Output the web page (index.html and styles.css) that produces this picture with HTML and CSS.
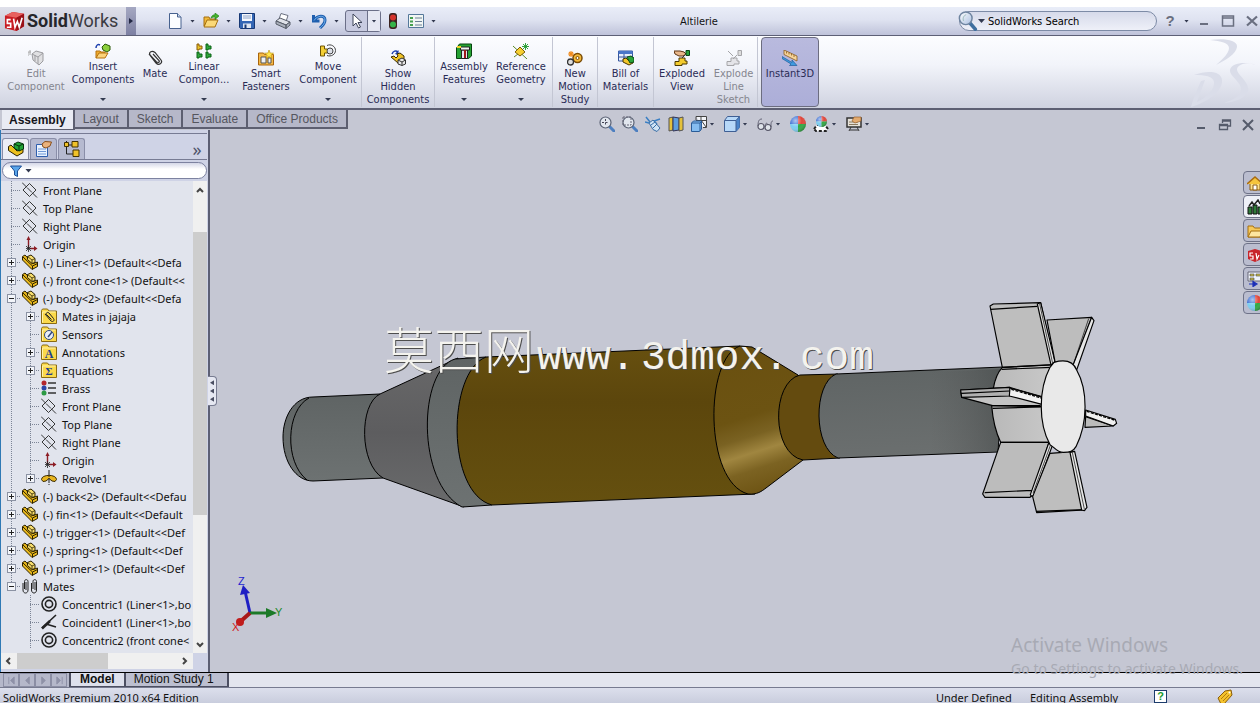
FILE: index.html
```html
<!DOCTYPE html>
<html lang="en">
<head>
<meta charset="utf-8">
<title>SolidWorks - Altilerie</title>
<link rel="stylesheet" href="styles.css">
</head>
<body>
<svg class="defs" aria-hidden="true">
  <defs>
    <linearGradient id="g-steel" x1="0" y1="0" x2="0" y2="1"><stop offset="0" stop-color="#5f6464"/><stop offset="1" stop-color="#6d7272"/></linearGradient>
    <linearGradient id="g-cone" x1="0" y1="0" x2="0" y2="1"><stop offset="0" stop-color="#686869"/><stop offset=".5" stop-color="#5d5d5f"/><stop offset="1" stop-color="#6a6b6c"/></linearGradient>
    <linearGradient id="g-brass" x1="0" y1="0" x2="0" y2="1"><stop offset="0" stop-color="#67500f"/><stop offset=".35" stop-color="#5c460c"/><stop offset="1" stop-color="#65500f"/></linearGradient>
    <linearGradient id="g-shine" gradientUnits="userSpaceOnUse" x1="732" y1="350" x2="778" y2="494"><stop offset="0" stop-color="#6a5010"/><stop offset=".45" stop-color="#6c5312"/><stop offset=".58" stop-color="#7a6222"/><stop offset=".69" stop-color="#a08640"/><stop offset=".8" stop-color="#7c6322"/><stop offset="1" stop-color="#6a5010"/></linearGradient>
    <linearGradient id="g-tail" gradientUnits="userSpaceOnUse" x1="900" y1="370" x2="905" y2="456"><stop offset="0" stop-color="#606565"/><stop offset="1" stop-color="#6b6f6f"/></linearGradient>
    <linearGradient id="g-dark" x1="0" y1="0" x2="1" y2="0"><stop offset="0" stop-color="#555" stop-opacity="0"/><stop offset="1" stop-color="#3c4040" stop-opacity=".45"/></linearGradient>
    <linearGradient id="g-hub" x1="0" y1="0" x2="1" y2="0"><stop offset="0" stop-color="#b9b9b9"/><stop offset="1" stop-color="#cbcbcb"/></linearGradient>
    <linearGradient id="g-glass" x1="0" y1="0" x2="1" y2="1"><stop offset="0" stop-color="#fff"/><stop offset="1" stop-color="#a9bfe0"/></linearGradient>
    <radialGradient id="g-ball" cx=".35" cy=".3" r=".8"><stop offset="0" stop-color="#fff" stop-opacity=".6"/><stop offset=".5" stop-color="#fff" stop-opacity="0"/><stop offset="1" stop-color="#000" stop-opacity=".35"/></radialGradient>
  </defs>
  <symbol id="i-part" viewBox="0 0 16 16"><path d="M.5 2.500L3 1l8 8.500 4.500-1.500v4.500L10 15.500.5 6z" fill="#e9b81b" stroke="#2a2000"/><path d="M1 3l9.500 9v3M10.500 12l5-2.500" fill="none" stroke="#2a2000"/><path d="M5.500 2.500L9 1l4 3.500v4L10 9.500 5.500 5.500z" fill="#f7dd6c" stroke="#2a2000"/><path d="M5.500 2.500l4.500 3.500v3.500M10 6l3-1.500" fill="none" stroke="#2a2000" stroke-width=".8"/></symbol>
  <symbol id="i-asm" viewBox="0 0 16 16"><path d="M.5 5.500L3 4l6 6 6-2.500v4L9 15 .5 9.500z" fill="#ecc01e" stroke="#2a2000"/><path d="M6 3l4-2 5.500 2v5l-4.500 2-5-3z" fill="#21a337" stroke="#06350f"/><path d="M6 3l5 2v5M11 5l4-2" fill="none" stroke="#06350f"/></symbol>
  <symbol id="i-plane" viewBox="0 0 16 16"><path d="M7.500 1.500L14 8l-6.500 6.500L1 8zM0 .5l4.500 4.500M5 5.500l5 5M10.500 11l4.500 4.500" fill="none" stroke="#222" stroke-width=".9"/></symbol>
  <symbol id="i-origin" viewBox="0 0 16 16"><path d="M6.500 12V3M8 12.500h5" stroke="#8c1c24" stroke-width="1.400"/><path d="M4.500 4L6.500 0l2 4zM12 10l3.500 2.500L12 15z" fill="#8c1c24"/><path d="M4 10l5 5M9 10l-5 5M6.500 9v7M4 12.500h5" stroke="#222" stroke-width=".8"/></symbol>
  <symbol id="i-folder" viewBox="0 0 16 16"><path d="M.5 15.500v-13l1-1.500h5l1.500 2h7.500v12.500z" fill="#fbd94a" stroke="#8a6b12"/><path d="M1.500 14.500V4h13" fill="none" stroke="#fff2ac"/></symbol>
  <symbol id="i-fmate" viewBox="0 0 16 16"><use href="#i-folder"/><path d="M4 6l6 7c2 1.500 4-.5 2.500-2.500L8 5C6.500 3.500 4.500 5 5.500 6.500l5 5" fill="none" stroke="#222"/></symbol>
  <symbol id="i-fsens" viewBox="0 0 16 16"><use href="#i-folder"/><circle cx="8" cy="9" r="4.500" fill="#e8eef8" stroke="#334a7a"/><path d="M7 11l4-5" stroke="#334a7a" stroke-width="1.500"/></symbol>
  <symbol id="i-fann" viewBox="0 0 16 16"><use href="#i-folder"/><text x="8" y="14" class="glyph">A</text></symbol>
  <symbol id="i-feq" viewBox="0 0 16 16"><use href="#i-folder"/><text x="8" y="13" class="glyph glyph-small">Σ</text></symbol>
  <symbol id="i-brass" viewBox="0 0 16 16"><circle cx="3" cy="3" r="2.500" fill="#b3262d"/><circle cx="3" cy="8" r="2.500" fill="#2b45a8"/><circle cx="3" cy="13" r="2.500" fill="#2c9a44"/><path d="M7 3h8M7 8h8M7 13h8" stroke="#333" stroke-width="1.500"/></symbol>
  <symbol id="i-revolve" viewBox="0 0 16 16"><path d="M.5 9.500C.5 4 15.500 4 15.500 9.500l-1.500 2-3-.5L8 8.500 5 11l-3 .5z" fill="#e9b61f" stroke="#3a2a00"/><path d="M8 0v16" stroke="#222" stroke-dasharray="5 1 1 1"/></symbol>
  <symbol id="i-mates" viewBox="0 0 16 16"><path d="M1 5v7c0 4 5 4 5 0V3.500C6 1 2.500 1 2.500 3.500V11M9.500 5v7c0 4 5 4 5 0V3.500c0-2.500-3.500-2.500-3.500 0V11M4 4v8M13 4v8" fill="none" stroke="#222"/></symbol>
  <symbol id="i-conc" viewBox="0 0 16 16"><circle cx="8" cy="8" r="7" fill="none" stroke="#222" stroke-width="1.600"/><circle cx="8" cy="8" r="3.600" fill="none" stroke="#222" stroke-width="1.600"/></symbol>
  <symbol id="i-coin" viewBox="0 0 16 16"><path d="M1 14L15 1M5 10l10 3" stroke="#222" stroke-width="1.600"/><path d="M1 14.500L9 7" stroke="#222" stroke-width="2.600"/></symbol>
  <symbol id="i-ball" viewBox="0 0 16 16"><path d="M8 8V0a8 8 0 0 0-8 8z" fill="#3b6fd4"/><path d="M8 8V0a8 8 0 0 1 8 8z" fill="#e0453a"/><path d="M8 8H0a8 8 0 0 0 8 8z" fill="#7ccdf0"/><path d="M8 8h8a8 8 0 0 1-8 8z" fill="#2fa843"/><circle cx="8" cy="8" r="8" fill="url(#g-ball)"/></symbol>
  <symbol id="i-lens" viewBox="0 0 16 16"><path d="M10 10l5 5" stroke="#4d7fc0" stroke-width="3" stroke-linecap="round"/><circle cx="6.500" cy="6.500" r="5.500" fill="#e1e6ee" stroke="#5a6274" stroke-width="1.200"/></symbol>
  <symbol id="i-openfolder" viewBox="0 0 16 16"><path d="M1 13V4h5l1 2h6v2H5z" fill="#f1b938" stroke="#a46f10"/><path d="M1 14l3-7h11l-3 7z" fill="#fbd978" stroke="#a46f10"/></symbol>
</svg>

<header class="titlebar">
  <div class="brand">
    <svg class="cube" viewBox="0 0 22 22" aria-hidden="true"><path d="M1 5l8-4 12 2v13l-8 5-12-3z" fill="#c81d24"/><path d="M1 5l8-4 12 2-8 4z" fill="#e8615f"/><path d="M13 7l8-4v13l-8 5z" fill="#9a1218"/><path d="M7 9H3.500v4H7v4H3M10 8l1.500 9L14 11l2 6 3-10" fill="none" stroke="#fff" stroke-width="1.700"/></svg>
    <span class="wordmark"><b>Solid</b>Works</span>
  </div>
  <button class="flyout" aria-label="Show menu"><i class="tri-right"></i></button>
  <nav class="quick" aria-label="Quick access">
    <button aria-label="New"><svg viewBox="0 0 16 16"><path d="M2.500.5h8l3.500 3.500v11.500H2.500z" fill="#fbfdff" stroke="#46618e"/><path d="M10.500.5V4H14" fill="#cddcf0" stroke="#46618e"/></svg></button><i class="drop"></i>
    <button aria-label="Open"><svg viewBox="0 0 16 16"><use href="#i-openfolder"/><path d="M8 5c1-3 3-3.500 4-3V0l4 3-4 3.500V4c-1 0-2 0-4 1z" fill="#45b42e" stroke="#1d7a12" stroke-width=".6"/></svg></button><i class="drop"></i>
    <button aria-label="Save"><svg viewBox="0 0 16 16"><path d="M.5.5h15v15h-14l-1-1z" fill="#3466b4" stroke="#173874"/><path d="M3 1h10v7H3z" fill="#f4f7fc"/><path d="M4 3h8M4 5h8" stroke="#8ea3c8"/><path d="M4 10.500h8V15H4z" fill="#dfe6f2"/><path d="M5.500 11.500h2V15h-2z" fill="#173874"/></svg></button><i class="drop"></i>
    <button aria-label="Print"><svg viewBox="0 0 16 16"><path d="M4 6l2-5.500 7 2-2 6" fill="#fff" stroke="#6b7180"/><path d="M1 8l4-3 10 4-4 3z" fill="#dfe2e8" stroke="#565c68"/><path d="M1 8v3l10 4.500v-3.500zM11 12l4-3v3l-4 3.500z" fill="#a9afba" stroke="#565c68"/></svg></button><i class="drop"></i>
    <button aria-label="Undo"><svg viewBox="0 0 16 16"><path d="M2.500 2v6h6M3 7.500c3-5 11-6 11-.5 0 4-3 6-5 8" fill="none" stroke="#1f5fae" stroke-width="3"/><path d="M3 7.500c3-5 11-6 11-.5 0 4-3 6-5 8" fill="none" stroke="#71b1ee" stroke-width="1"/></svg></button><i class="drop"></i>
    <span class="selectbox"><button aria-label="Select"><svg viewBox="0 0 16 16"><path d="M4 1v12l3-3 2.500 5 2-1L9 9.500h4z" fill="#fff" stroke="#3d4459"/></svg></button><button class="half" aria-label="Select options"><i class="drop"></i></button></span>
    <button class="signal" aria-label="Rebuild"><svg viewBox="0 0 16 16"><rect x="4" y="0" width="8" height="16" rx="3" fill="#3b2320"/><circle cx="8" cy="4.500" r="3" fill="#d5332c"/><circle cx="8" cy="11.500" r="3" fill="#35b348"/></svg></button>
    <button class="opts" aria-label="Options"><svg viewBox="0 0 16 16"><path d="M.5 1.500h15v13H.5z" fill="#f1f6f4" stroke="#55789a"/><path d="M2 4h3v2H2zM2 7.500h3v2H2zM2 11h3v2H2z" fill="#46a04e"/><path d="M7 5h7M7 8.500h7M7 12h7" stroke="#6c8096"/></svg></button><i class="drop"></i>
  </nav>
  <h1 class="doc">Altilerie</h1>
  <label class="search"><svg viewBox="0 0 22 22" aria-hidden="true"><path d="M13 13l6 7" stroke="#3e6f9f" stroke-width="4" stroke-linecap="round"/><circle cx="8.500" cy="8" r="7" fill="url(#g-glass)" stroke="#6e84a0" stroke-width="1.600"/><path d="M6 11c-1-3 0-6 3-7" fill="none" stroke="#9bb"/></svg><i class="drop drop-lg"></i><input type="text" value="SolidWorks Search" aria-label="Search"></label>
  <div class="winctl">
    <button class="help" aria-label="Help">?</button><i class="drop"></i>
    <button aria-label="Minimize"><svg viewBox="0 0 14 14"><path d="M3 10h8" stroke="#6a6f80" stroke-width="2"/></svg></button>
    <button aria-label="Maximize"><svg viewBox="0 0 14 14"><path d="M1.500 2h11v10h-11zM1.500 4h11" fill="none" stroke="#6a6f80" stroke-width="1.500"/></svg></button>
    <button aria-label="Close"><svg viewBox="0 0 14 14"><path d="M2 2.500l10 9M12 2.500l-10 9" stroke="#6a6f80" stroke-width="2.200"/></svg></button>
  </div>
</header>

<section class="ribbon" aria-label="Assembly tools">
  <div class="group g1">
    <button class="tool off" disabled><svg viewBox="0 0 16 16"><path d="M0 6V2h3M2 0v5" fill="none" stroke="#aaa"/><path d="M4 4l4-3 7 2v8l-4 4-6-5z" fill="#e0e0e2" stroke="#9c9ca0"/><path d="M4 4l6 3v7M10 7l5-4M7 5v6" fill="none" stroke="#9c9ca0"/></svg><span>Edit<br>Component</span></button>
    <button class="tool up"><svg viewBox="0 0 16 16"><path d="M7 4l3-3 5 2v4l-3 2-4-2z" fill="#8ccf3c" stroke="#2b5b08"/><path d="M1 5c0-3 2-4 4-3" fill="none" stroke="#1c3fae" stroke-width="1.500"/><path d="M1 15V8h4l1 1h4v2H5z" fill="#f0ab2c" stroke="#b5730e"/><path d="M1 15l3-5h9l-3 5z" fill="#fcd37a" stroke="#b5730e"/></svg><span>Insert<br>Components</span><i class="drop"></i></button>
    <button class="tool"><svg viewBox="0 0 16 16"><path d="M2 4l7 9c3 3 7 0 5-3L8 2.500C5 0 1.500 2 3 5l6.500 7c2 1 3.500 0 2.500-1.500L6 4" fill="none" stroke="#333" stroke-width="1.200"/></svg><span>Mate</span></button>
    <button class="tool up"><svg viewBox="0 0 16 16"><path d="M1 1h2v2h3v3H3v1H1z" fill="#e9c42b" stroke="#8a5a08"/><path d="M10 1h2v2h3v3h-3v1h-2zM1 9h2v2h3v3H3v1H1zM10 9h2v2h3v3h-3v1h-2z" fill="#2fa53a" stroke="#0a6416"/></svg><span>Linear<br>Compon...</span><i class="drop"></i></button>
    <button class="tool"><svg viewBox="0 0 16 16"><path d="M.5 15V3h5l1 1.500h9V15z" fill="#f5b945" stroke="#a8640c"/><path d="M3 7h5v6H3zM10 8h3v5h-3z" fill="#eef0f4" stroke="#555"/><path d="M11 0l1.200 3 3.300.2-2.500 2 .8 3L11 6.500 8.300 8.200l.9-3-2.700-2L10 3z" fill="#ffe54a" stroke="#b98d0b" stroke-width=".6"/></svg><span>Smart<br>Fasteners</span></button>
    <button class="tool up"><svg viewBox="0 0 16 16"><path d="M.5 3h4v3h3v4h-3v3h-4z" fill="#f4cf35" stroke="#6e5405"/><path d="M7 2.500c4-2 8.500 1 8.500 5S11 14 7 12.500" fill="none" stroke="#444"/><circle cx="10" cy="8" r="3" fill="#dde0e8" stroke="#444"/></svg><span>Move<br>Component</span><i class="drop"></i></button>
  </div>
  <div class="group g2">
    <button class="tool"><svg viewBox="0 0 16 16"><path d="M2 4c1-3 4-4 6-2" fill="none" stroke="#1c3fae" stroke-width="1.500"/><path d="M8.500 0v5L5 4z" fill="#1c3fae"/><path d="M1 7l3-1 2 2 2-2-1-2 3-1 4 3v3l-2 1-4 3z" fill="#f0c325" stroke="#3b2b00"/><path d="M8 10l4-2 3.500 2v4L12 15.500 8 14z" fill="#e8e8e8" stroke="#333"/><path d="M8 10l4 2v3.500M12 12l3.500-2" fill="none" stroke="#333"/></svg><span>Show<br>Hidden<br>Components</span></button>
  </div>
  <div class="group g3">
    <button class="tool up"><svg viewBox="0 0 16 16"><path d="M.5 5l3-4h12v12l-3 2.500H.5z" fill="#25a233" stroke="#07430f"/><path d="M5.500 7h6v8.500h-6z" fill="#e6e9ee" stroke="#222"/><path d="M4.500 4h9v3h-9z" fill="#f2f2f2" stroke="#222"/><path d="M8 7h2v8H8z" fill="#a01818"/><path d="M1 4h4" stroke="#f3d52c" stroke-width="2"/></svg><span>Assembly<br>Features</span><i class="drop"></i></button>
    <button class="tool up"><svg viewBox="0 0 16 16"><path d="M0 3l14 13M1 14l4-3" stroke="#5b8a26"/><path d="M7 4l5 5-5 4-5-4z" fill="#f6cf31" stroke="#7c5d05"/><path d="M12.500 0v7M9 3.500h7M10 1l5 5M15 1l-5 5" stroke="#1f9a2e" stroke-width=".9"/></svg><span>Reference<br>Geometry</span><i class="drop"></i></button>
  </div>
  <div class="group g4">
    <button class="tool"><svg viewBox="0 0 16 16"><circle cx="10.500" cy="8" r="4.500" fill="#f4b93a" stroke="#7a4b05" stroke-width="1.500"/><circle cx="10.500" cy="8" r="1.500" fill="#fff" stroke="#7a4b05"/><circle cx="3.500" cy="12" r="3" fill="#ddd" stroke="#333" stroke-width="1.300"/><path d="M4 1v6M1 4h6M2 2l4 4M6 2L2 6" stroke="#f08a1c" stroke-width="1.100"/></svg><span>New<br>Motion<br>Study</span></button>
  </div>
  <div class="group g5">
    <button class="tool"><svg viewBox="0 0 16 16"><path d="M.5 1h14v10H.5z" fill="#e8eefb" stroke="#34559c"/><path d="M.5 1h14v3H.5z" fill="#4a76c9"/><path d="M1 7h14M6 4v7" stroke="#34559c"/><path d="M5 9l3-1 3 3 4-2v4l-4 2-6-3z" fill="#f1c62b" stroke="#463400"/><path d="M9 7l4-1 3 2v4l-4 1z" fill="#2aa539" stroke="#0a4a14"/></svg><span>Bill of<br>Materials</span></button>
  </div>
  <div class="group g6">
    <button class="tool"><svg viewBox="0 0 16 16"><path d="M0 1h6l4 1 2 2-3 2H5L1 4z" fill="#e9b78a" stroke="#5d3412"/><path d="M12 .5h3.500v5H12z" fill="#2ba43a" stroke="#0b4514"/><path d="M5 8h6v3h2v3H8v1.500H1v-4h4z" fill="#f3cb2e" stroke="#4b3800"/><path d="M11 5l-3 3" stroke="#333"/></svg><span>Exploded<br>View</span></button>
    <button class="tool off" disabled><svg viewBox="0 0 16 16"><path d="M2 1l5 5M12 .5h3.500v5H12z" fill="#ddd" stroke="#a5a5a8"/><path d="M5 8h6v3h2v3H8v1.500H1v-4h4z" fill="#e4e4e8" stroke="#a5a5a8"/><path d="M11 5L7 9" stroke="#a5a5a8"/></svg><span>Explode<br>Line<br>Sketch</span></button>
  </div>
  <div class="group g7">
    <button class="tool pressed" aria-pressed="true"><svg viewBox="0 0 16 16"><path d="M2 0l13 6v5L2 4.500z" fill="#f6d49a" stroke="#8a5a1c" stroke-width=".8"/><path d="M4.500 1.500v2M7 2.500v2M9.500 3.500v2M12 5v2" stroke="#8a5a1c" stroke-width=".8"/><path d="M0 6.500l10 6V10l5 5.500H7.500l1.500-1.500L0 8.500z" fill="#3f9ade" stroke="#1e5d9c" stroke-width=".7"/></svg><span>Instant3D</span></button>
  </div>
  <svg class="dslogo" viewBox="0 0 66 68" aria-hidden="true"><path d="M20 1c14-2 28 0 27 7-1 7-11 13-21 18 7-6 13-12 13-17 0-5-8-7-19-8zM4 36c14-5 27-4 28 5 1 11-14 22-31 27 2-9 6-17 10-26l4-1-8 22c10-5 18-13 17-20-1-6-9-7-20-7zM66 26c-9-3-18-1-19 4s13 13 11 22c-2 7-12 11-24 12 9-3 16-7 17-13 1-8-12-14-11-20 1-7 15-9 26-5z"/></svg>
</section>

<nav class="cmdtabs" aria-label="Command manager">
  <button class="on">Assembly</button><button>Layout</button><button>Sketch</button><button>Evaluate</button><button>Office Products</button>
</nav>

<main class="work">
  <aside class="panel">
    <div class="ptabs">
      <button class="on" aria-label="Feature tree"><svg viewBox="0 0 16 16"><use href="#i-asm"/></svg></button>
      <button aria-label="Properties"><svg viewBox="0 0 16 16"><path d="M.5 3.500h11v12H.5z" fill="#eaf3ff" stroke="#2f5fae"/><path d="M2 8h8M2 10.500h8M2 13h8" stroke="#6f98d6"/><path d="M6 3l3-2.500L15.500 1 14 5l-4 2-3-1z" fill="#eab27c" stroke="#8a501c"/></svg></button>
      <button aria-label="Configurations"><svg viewBox="0 0 16 16"><path d="M2.500 0v13H10M2.500 4H9" fill="none" stroke="#222"/><path d="M.5 1.500h4v4h-4zM8 .5h6v5.500H8zM9 9h6v6.500H9z" fill="#f0c22a" stroke="#453300"/></svg></button>
      <button class="more" aria-label="More">»</button>
    </div>
    <label class="filter"><svg viewBox="0 0 12 12" aria-hidden="true"><path d="M.5 1h11L7.500 6v5.500l-3-1.500V6z" fill="#5aa5ea" stroke="#1c4f96"/></svg><i class="drop drop-lg"></i><input type="text" aria-label="Filter tree"></label>
    <div class="scroller">
      <ul class="tree">
        <li><div class="row"><i class="twig"></i><svg><use href="#i-plane"/></svg><span>Front Plane</span></div></li>
        <li><div class="row"><i class="twig"></i><svg><use href="#i-plane"/></svg><span>Top Plane</span></div></li>
        <li><div class="row"><i class="twig"></i><svg><use href="#i-plane"/></svg><span>Right Plane</span></div></li>
        <li><div class="row"><i class="twig"></i><svg><use href="#i-origin"/></svg><span>Origin</span></div></li>
        <li><div class="row"><i class="twig"><button class="exp plus" aria-label="Expand"></button></i><svg><use href="#i-part"/></svg><span>(-) Liner&lt;1&gt; (Default&lt;&lt;Defa</span></div></li>
        <li><div class="row"><i class="twig"><button class="exp plus" aria-label="Expand"></button></i><svg><use href="#i-part"/></svg><span>(-) front cone&lt;1&gt; (Default&lt;&lt;</span></div></li>
        <li><div class="row"><i class="twig"><button class="exp" aria-label="Collapse"></button></i><svg><use href="#i-part"/></svg><span>(-) body&lt;2&gt; (Default&lt;&lt;Defa</span></div>
          <ul>
            <li><div class="row"><i class="twig"><button class="exp plus" aria-label="Expand"></button></i><svg><use href="#i-fmate"/></svg><span>Mates in jajaja</span></div></li>
            <li><div class="row"><i class="twig"></i><svg><use href="#i-fsens"/></svg><span>Sensors</span></div></li>
            <li><div class="row"><i class="twig"><button class="exp plus" aria-label="Expand"></button></i><svg><use href="#i-fann"/></svg><span>Annotations</span></div></li>
            <li><div class="row"><i class="twig"><button class="exp plus" aria-label="Expand"></button></i><svg><use href="#i-feq"/></svg><span>Equations</span></div></li>
            <li><div class="row"><i class="twig"></i><svg><use href="#i-brass"/></svg><span>Brass</span></div></li>
            <li><div class="row"><i class="twig"></i><svg><use href="#i-plane"/></svg><span>Front Plane</span></div></li>
            <li><div class="row"><i class="twig"></i><svg><use href="#i-plane"/></svg><span>Top Plane</span></div></li>
            <li><div class="row"><i class="twig"></i><svg><use href="#i-plane"/></svg><span>Right Plane</span></div></li>
            <li><div class="row"><i class="twig"></i><svg><use href="#i-origin"/></svg><span>Origin</span></div></li>
            <li><div class="row"><i class="twig"><button class="exp plus" aria-label="Expand"></button></i><svg><use href="#i-revolve"/></svg><span>Revolve1</span></div></li>
          </ul>
        </li>
        <li><div class="row"><i class="twig"><button class="exp plus" aria-label="Expand"></button></i><svg><use href="#i-part"/></svg><span>(-) back&lt;2&gt; (Default&lt;&lt;Defau</span></div></li>
        <li><div class="row"><i class="twig"><button class="exp plus" aria-label="Expand"></button></i><svg><use href="#i-part"/></svg><span>(-) fin&lt;1&gt; (Default&lt;&lt;Default</span></div></li>
        <li><div class="row"><i class="twig"><button class="exp plus" aria-label="Expand"></button></i><svg><use href="#i-part"/></svg><span>(-) trigger&lt;1&gt; (Default&lt;&lt;Def</span></div></li>
        <li><div class="row"><i class="twig"><button class="exp plus" aria-label="Expand"></button></i><svg><use href="#i-part"/></svg><span>(-) spring&lt;1&gt; (Default&lt;&lt;Def</span></div></li>
        <li><div class="row"><i class="twig"><button class="exp plus" aria-label="Expand"></button></i><svg><use href="#i-part"/></svg><span>(-) primer&lt;1&gt; (Default&lt;&lt;Def</span></div></li>
        <li><div class="row"><i class="twig"><button class="exp" aria-label="Collapse"></button></i><svg><use href="#i-mates"/></svg><span>Mates</span></div>
          <ul class="open">
            <li><div class="row"><i class="twig"></i><svg><use href="#i-conc"/></svg><span>Concentric1 (Liner&lt;1&gt;,bo</span></div></li>
            <li><div class="row"><i class="twig"></i><svg><use href="#i-coin"/></svg><span>Coincident1 (Liner&lt;1&gt;,bo</span></div></li>
            <li><div class="row"><i class="twig"></i><svg><use href="#i-conc"/></svg><span>Concentric2 (front cone&lt;</span></div></li>
          </ul>
        </li>
      </ul>
      <div class="vbar" aria-hidden="true"><svg viewBox="0 0 14 16"><path d="M4 11l3-3 3 3"/></svg><i class="vthumb"></i><svg viewBox="0 0 14 16"><path d="M4 6l3 3 3-3"/></svg></div>
    </div>
    <div class="hbar" aria-hidden="true"><svg viewBox="0 0 14 16"><path d="M9 5L6 8l3 3"/></svg><i class="hthumb"></i><svg viewBox="0 0 14 16"><path d="M4 5l3 3-3 3"/></svg></div>
    <button class="splitter" aria-label="Hide panel"><i></i><i></i><i></i></button>
  </aside>

  <section class="view" aria-label="Graphics area">
    <svg class="model" viewBox="210 130 1050 542" role="img" aria-label="Shell assembly">
      <g stroke="#000" stroke-width="1" stroke-linejoin="round">
        <path d="M313 397C293 397 283 418 283 437 283 462 296 481 313 481L383 478 380 394z" fill="url(#g-steel)"/>
        <path d="M309 398C286 410 284 462 307 480" fill="none"/>
        <path d="M380 394C359 404 359 464 383 478L464 507 458 358z" fill="url(#g-cone)"/>
        <path d="M455 359C418 370 416 483 462 507L492 505 486 357z" fill="url(#g-steel)"/>
        <path d="M486 357C447 372 446 493 492 505L755 494 740 346z" fill="url(#g-brass)"/>
        <path d="M740 346C704 358 704 482 748 494 757 495 762 491 766 488L803 460 798 375 752 347z" fill="url(#g-shine)"/>
        <path d="M800 375C771 382 771 454 803 460L840 458 838 374z" fill="#644b0f"/>
        <path d="M836 374L1003 367 998 452 838 458C813 448 813 384 836 374z" fill="url(#g-tail)"/>
        <path d="M930 372l72-3-4 82-68 3z" fill="url(#g-dark)" stroke="none"/>
      </g>
      <g transform="translate(930 290) scale(.3333)" stroke="#000" stroke-width="3.500" stroke-linejoin="round">
        <path d="M217 232L365 222 400 350 357 457 212 457C194 420 188 385 185 347L190 295C195 265 204 246 217 232z" fill="url(#g-hub)"/>
        <path d="M180 48L190 42 332 38 372 218 365 225 217 232z" fill="#bebebe"/><path d="M182 58L322 49M217 232l150-8M215 238l150-6" fill="none"/>
        <path d="M322 42l10-4 43 177-12 10z" fill="#e2e2e2"/><path d="M329 42l39 178" fill="none" stroke-width="2"/>
        <path d="M351 90L485 82 430 230 375 215z" fill="#bdbdbd"/>
        <path d="M485 82l7 10-52 148-12-12z" fill="#e6e6e6"/><path d="M476 86L432 218" fill="none" stroke-width="2"/>
        <path d="M92 300L238 292 335 320 335 350 188 347 95 322z" fill="#c4c4c4"/>
        <path d="M92 300l148-8v26L95 322zM94 310l144-7" fill="#b0b0b0"/>
        <path d="M240 294L338 322 336 343 238 318z" fill="#f2f2f2"/><path d="M244 298l90 26" fill="none" stroke-width="4" stroke-dasharray="9 4"/>
        <path d="M186 347l146 0M188 355l144-4M210 464l148-5" fill="none"/>
        <path d="M212 457L357 457 308 612 300 622 165 622 158 612z" fill="#bcbcbc"/>
        <path d="M164 608l142-7M357 457l10 10-53 145-8 8-5-6z" fill="#e4e4e4"/><path d="M362 464l-53 146" stroke-width="2"/>
        <path d="M360 490L428 485 465 660 320 668 308 620z" fill="#bebebe"/><path d="M318 664l146-5"/>
        <path d="M420 487l14-3 37 168-8 10-8-2z" fill="#e8e8e8"/><path d="M427 487l36 170" stroke-width="2"/>
        <path d="M467 380l82 28-84 4z" fill="#bbb"/>
        <path d="M467 360L556 388 560 400 550 408 467 378z" fill="#f0f0f0"/><path d="M470 364l86 27" fill="none" stroke-width="4" stroke-dasharray="9 4"/>
        <path d="M372 217C410 206 430 215 440 240 474 300 474 400 438 470 430 484 420 487 400 487 380 487 372 470 360 464 325 400 325 300 360 232z" fill="#e9e9e9"/>
      </g>
      <g stroke-width="2">
        <path d="M250 613l-5-22" stroke="#1f1fc4" stroke-width="3"/><path d="M240 595l3-10 7 8z" fill="#1f1fc4"/>
        <path d="M250 613h18" stroke="#1c7a28" stroke-width="3"/><path d="M266 608l11 5-11 5z" fill="#1c7a28"/>
        <path d="M250 613l-9 8" stroke="#a81818" stroke-width="4"/><circle cx="240" cy="622" r="4" fill="#c01c1c"/>
      </g>
      <g class="axis"><text x="238" y="585" fill="#1f1fd0">Z</text><text x="275" y="616" fill="#1c8a28">Y</text><text x="232" y="631" fill="#d01c1c">X</text></g>
      <g class="mark">
        <g class="mark-shade"><text x="385" y="370" class="han">莫西网</text><text x="538" y="370">www.</text><text x="642" y="370">3dmox.</text><text x="801" y="370">com</text></g>
        <g class="mark-face" aria-hidden="true"><text x="384" y="369" class="han">莫西网</text><text x="537" y="369">www.</text><text x="641" y="369">3dmox.</text><text x="800" y="369">com</text></g>
      </g>
    </svg>

    <nav class="hud" aria-label="View tools">
      <button aria-label="Zoom to fit"><svg viewBox="0 0 16 16"><use href="#i-lens"/><path d="M6.500 3v7M3 6.500h7" stroke="#445" stroke-dasharray="2 1.500"/></svg></button>
      <button aria-label="Zoom to area"><svg viewBox="0 0 16 16"><use href="#i-lens"/><path d="M1 1h8v8H1z" fill="none" stroke="#667" stroke-dasharray="2 1"/></svg></button>
      <button aria-label="Previous view"><svg viewBox="0 0 16 16"><path d="M1 1l4 5M0 6l4 1M15 3L9 5l3 3" fill="none" stroke="#3a7fc4" stroke-width="1.500"/><path d="M4 7l4-3 7 8-3 3.500-4-2z" fill="#cfe3f5" stroke="#3a6ea5"/><path d="M6 9l4-3M8 12l4-4" stroke="#3a6ea5"/></svg></button>
      <button aria-label="Section view"><svg viewBox="0 0 16 16"><path d="M1 2l4-1v13l-4 1z" fill="#e4c13a" stroke="#555"/><path d="M5 1l6 1v12l-6 1z" fill="#5f9edc" stroke="#335"/><path d="M11 2l4-1v13l-4 1z" fill="#e4c13a" stroke="#555"/></svg></button>
      <button aria-label="View orientation"><svg viewBox="0 0 16 16"><path d="M5 .5h10.500v11H12M5 .5V4M10 .5V4M5 4.500h10.500M10 4l5 7" fill="#f2f4f8" stroke="#444"/><path d="M.5 7l2-2h8v8l-2 2.500h-8z" fill="#86bdf0" stroke="#2a5c98"/><path d="M1 7h8v8M9 7l2-2" fill="none" stroke="#2a5c98"/></svg></button><i class="drop"></i>
      <button aria-label="Display style"><svg viewBox="0 0 16 16"><path d="M.5 4.500l3-4h12v11l-3.500 4H.5z" fill="#b7d8f8" stroke="#3f5f94"/><path d="M12 4.500l3.500-4v11l-3.500 4z" fill="#4b84c9"/><path d="M.5 4.500H12v11M12 4.500l3.500-4" fill="none" stroke="#3f5f94"/></svg></button><i class="drop"></i>
      <button aria-label="Hide/show items"><svg viewBox="0 0 16 16"><path d="M1 10c0-5 1-7 4-7M8 11c0-4 2-5 3-2M14 11c0-4 0-6 2-6" fill="none" stroke="#667"/><circle cx="4" cy="10.500" r="3" fill="#dfe4ea" stroke="#556" stroke-width="1.200"/><circle cx="11" cy="11.500" r="3" fill="#dfe4ea" stroke="#556" stroke-width="1.200"/></svg></button><i class="drop"></i>
      <button aria-label="Edit appearance"><svg viewBox="0 0 16 16"><use href="#i-ball"/></svg></button>
      <button aria-label="Apply scene"><svg viewBox="0 0 16 16"><path d="M1 13l3-4h8l3 4-2 2H3z" fill="#fff" stroke="#222" stroke-dasharray="3 2" stroke-width="2"/><use href="#i-ball" x="3" y="0" width="11" height="11"/></svg></button><i class="drop"></i>
      <button aria-label="View settings"><svg viewBox="0 0 16 16"><path d="M1 2h14v9H1z" fill="#e6e2da" stroke="#333" stroke-width="1.500"/><path d="M3 6h9M3 8.500h9" stroke="#8a7a60"/><path d="M8 1h7v4L9 7 6 5z" fill="#e3ab70" stroke="#8a501c" stroke-width=".6"/><path d="M5 11l-2 4M11 11l2 4M4 14h8" stroke="#333"/></svg></button><i class="drop"></i>
    </nav>
    <div class="mdi">
      <button aria-label="Minimize document"><svg viewBox="0 0 14 14"><path d="M2 10h8" stroke="#555b6b" stroke-width="2"/></svg></button>
      <button aria-label="Restore document"><svg viewBox="0 0 14 14"><path d="M4.500 5V2h8v6h-3M4.500 3h8M1.500 6.500h8v5h-8zM1.500 7.500h8" fill="none" stroke="#555b6b" stroke-width="1.300"/></svg></button>
      <button aria-label="Close document"><svg viewBox="0 0 14 14"><path d="M2 2l10 10M12 2L2 12" stroke="#555b6b" stroke-width="2"/></svg></button>
    </div>
    <nav class="taskpane" aria-label="Task pane">
      <button aria-label="Resources"><svg viewBox="0 0 16 16"><path d="M3 8v7h10V8" fill="#fbe08a" stroke="#8a5a10"/><path d="M0 9l8-7 8 7" fill="#f5c53c" stroke="#a86a10" stroke-width="1.500"/><path d="M6 10h4v5H6z" fill="#fff" stroke="#8a5a10"/></svg></button>
      <button class="on" aria-label="Design library"><svg viewBox="0 0 16 16"><path d="M1 8h4v7H1zM6 6h4v9H6zM11 8h4v7h-4z" fill="#2f7a3a" stroke="#111"/><path d="M2 7l3-4 2 3 4-5 2 4" fill="none" stroke="#222" stroke-width="1.500"/></svg></button>
      <button aria-label="File explorer"><svg viewBox="0 0 16 16"><path d="M1 14V3h5l1.500 2H14v9z" fill="#f6c95a" stroke="#a46f10"/><path d="M1 14l3-6h12l-3 6z" fill="#fde6a0" stroke="#a46f10"/></svg></button>
      <button aria-label="Search results"><svg viewBox="0 0 16 16"><path d="M1 4l7-2 7 2v8l-7 3-7-3z" fill="#c8242a"/><path d="M6 6H3v3h3v3H3M9 6l1 6 2-4" fill="none" stroke="#fff" stroke-width="1.200"/></svg></button>
      <button aria-label="View palette"><svg viewBox="0 0 16 16"><path d="M1 1h14v9H1z" fill="#eef3fb" stroke="#667"/><path d="M3 3h4v2H3zM3 7h4v2H3zM9 3h5v2H9z" fill="#cfc04a" stroke="#444" stroke-width=".6"/><path d="M2 13h5M6 10.500l4 2.500-4 2.500z" fill="#1c30b8" stroke="#1c30b8" stroke-width="1.200"/></svg></button>
      <button aria-label="Appearances"><svg viewBox="0 0 16 16"><use href="#i-ball"/></svg></button>
    </nav>
    <div class="activate"><strong>Activate Windows</strong><span>Go to Settings to activate Windows.</span></div>
  </section>
</main>

<nav class="sheets" aria-label="Sheets">
  <div class="steps">
    <button aria-label="First"><svg viewBox="0 0 10 10"><path d="M2 1v8M8 1L4 5l4 4z"/></svg></button><button aria-label="Previous"><svg viewBox="0 0 10 10"><path d="M7 1L3 5l4 4z"/></svg></button><button aria-label="Next"><svg viewBox="0 0 10 10"><path d="M3 1l4 4-4 4z"/></svg></button><button aria-label="Last"><svg viewBox="0 0 10 10"><path d="M8 1v8M2 1l4 4-4 4z"/></svg></button>
  </div>
  <button class="sheet on">Model</button><button class="sheet">Motion Study 1</button>
</nav>
<footer class="status">
  <span class="edition">SolidWorks Premium 2010 x64 Edition</span>
  <span class="state">Under Defined</span>
  <span class="mode">Editing Assembly</span>
  <button class="qhelp" aria-label="Quick tips">?</button>
  <button class="tag" aria-label="Tags"><svg viewBox="0 0 16 16"><path d="M1 9l7-7 6-1 1 5-8 9H4z" fill="#f4c22c" stroke="#8a5c08"/><path d="M4 10l6-6M6 12l6-6" stroke="#b07c10"/><circle cx="12.500" cy="3.500" r="1" fill="#fff"/></svg></button>
</footer>
</body>
</html>
```
FILE: styles.css
```css
* { box-sizing: border-box; }
html, body { height: 100%; }
body {
  margin: 0;
  display: flex;
  flex-direction: column;
  overflow: hidden;
  padding-top: 7px;
  background: #fff;
  color: #111;
  font: 11px/13px "Noto Sans", sans-serif;
}
button { border: 0; padding: 0; background: none; font: inherit; color: inherit; flex: none; }
button svg { display: block; width: 16px; height: 16px; }
input { border: 0; background: none; padding: 0; min-width: 0; font: inherit; color: #000; outline: 0; }
.defs { position: absolute; width: 0; height: 0; }
.glyph { font: bold 12px "Liberation Serif", serif; fill: #1f3f8f; text-anchor: middle; }
.glyph-small { font-size: 11px; }
.drop { display: block; flex: none; width: 5px; height: 3px; background: #333a50; clip-path: polygon(0 0, 100% 0, 50% 100%); }
.drop-lg { width: 7px; height: 4px; }

/* title bar */
.titlebar {
  position: relative;
  display: flex;
  align-items: center;
  height: 29px;
  flex: none;
  border-bottom: 1px solid #5d6076;
  background: linear-gradient(#e9edf8, #dfe3f1 45%, #bfc3da);
}
.brand { display: flex; align-items: center; gap: 2px; width: 126px; height: 100%; padding-left: 4px; background: linear-gradient(#dfe0ea, #c4c5d4); }
.cube { width: 21px; height: 21px; flex: none; }
.wordmark { font: 18px/20px Roboto, sans-serif; color: #3b3b42; }
.wordmark b { color: #26262b; }
.flyout { display: flex; align-items: center; justify-content: center; width: 10px; height: 100%; background: linear-gradient(#a5a8c2, #7d80a2); }
.tri-right { width: 4px; height: 6px; background: #222844; clip-path: polygon(0 0, 100% 50%, 0 100%); }
.quick { display: flex; align-items: center; margin-left: 31px; }
.quick > button { width: 16px; margin-right: 7px; }
.quick > .drop { margin-right: 8px; }
.selectbox { display: flex; align-items: center; height: 22px; margin: 0 4px 0 -2px; border: 1px solid #6b6f88; border-radius: 3px; background: #c8cbe0; }
.selectbox > button { width: 21px; height: 100%; display: flex; align-items: center; justify-content: center; }
.selectbox > .half { width: 13px; border-left: 1px solid #6b6f88; background: #e6e8f3; }
.doc { position: absolute; inset: 8px 0 auto 0; margin: 0 auto; padding-left: 138px; text-align: center; font: 11px/13px "DejaVu Sans Condensed", "Noto Sans", sans-serif; pointer-events: none; }
.search { display: flex; align-items: center; gap: 3px; width: 198px; height: 20px; margin-left: auto; border: 1px solid #7d8ba6; border-radius: 10px; background: linear-gradient(#d6daea, #eef0f8); font: 11px/13px "DejaVu Sans Condensed", "Noto Sans", sans-serif; }
.search svg { width: 20px; height: 20px; flex: none; margin-left: -2px; }
.search .drop { margin-left: -3px; }
.search input { flex: 1; }
.winctl { display: flex; align-items: center; gap: 10px; padding: 0 1px 0 8px; }
.winctl svg { width: 14px; height: 14px; }
.winctl > .drop { margin: 0 -2px 0 -1px; }
.help { width: 10px; font: bold 15px/16px "Liberation Sans", sans-serif; color: #6a6f80; }

/* ribbon */
.ribbon {
  position: relative;
  display: flex;
  flex: none;
  height: 74px;
  border-bottom: 2px solid #5d5f73;
  background: linear-gradient(#fcfdff, #f2f4fa 40%, #cfd2e0);
  font: 11px/13px "DejaVu Sans Condensed", "Noto Sans", sans-serif;
  color: #2a2c56;
}
.group { display: grid; height: 70px; margin-top: 1px; border-right: 1px solid #c3c6d3; }
.g1 { grid-template-columns: 68px 66px 38px 60px 64px 60px; padding: 0 3px 0 2px; }
.g2 { grid-template-columns: 72px; }
.g3 { grid-template-columns: 58px 56px; padding-right: 3px; }
.g4 { grid-template-columns: 44px; }
.g5 { grid-template-columns: 55px; }
.g6 { grid-template-columns: 56px 47px; }
.g7 { grid-template-columns: 58px; padding-left: 3px; border: 0; }
.tool { position: relative; display: flex; flex-direction: column; align-items: center; padding-top: 13px; white-space: nowrap; }
.tool.up { padding-top: 6px; }
.tool span { margin-top: 1px; }
.tool .drop { width: 6px; margin-top: 12px; }
.tool.off { color: #85868f; }
.tool.pressed { border: 1px solid #6c6d80; border-radius: 4px; padding-top: 12px; background: linear-gradient(#b9bade, #acaed8); }
.dslogo { width: 66px; height: 68px; margin: 3px 4px 0 auto; fill: #dadde9; }

/* command tabs */
.cmdtabs { display: flex; flex: none; height: 20px; padding-left: 2px; background: #c5c7d3; font: 12px/16px "Liberation Sans", sans-serif; color: #55565f; }
.cmdtabs button { height: 19px; padding: 0 8px; border: solid #5d5f70; border-width: 0 2px 2px 0; background: #b6b8c9; }
.cmdtabs .on { height: 20px; padding: 0 7px; border-bottom-width: 1px; background: #e9ebf3; font-weight: bold; color: #16161c; }

/* work area */
.work { display: flex; flex: 1; min-height: 0; background: #c5c7d3; }
.panel { position: relative; display: flex; flex-direction: column; flex: none; width: 210px; padding: 3px 1px 3px 0; border: solid #5c5f74; border-width: 0 2px 0 0; border-left: 1px solid #2f79b5; background: #cfd3e6; }
.ptabs { display: flex; align-items: flex-end; gap: 1px; height: 27px; padding-left: 1px; border-top: 1px solid #777b94; border-bottom: 1px solid #777b94; flex: none; }
.ptabs button { display: flex; align-items: center; justify-content: center; width: 27px; height: 21px; border: 1px solid #8a8ea8; border-bottom: 0; border-radius: 3px 3px 0 0; background: #b6bad0; }
.ptabs .on { background: #eceef6; }
.ptabs .more { margin-left: auto; border: 0; width: 20px; background: none; font: 18px/18px "Noto Sans", sans-serif; color: #4e5268; }
.filter { display: flex; align-items: center; flex: none; height: 17px; margin: 2px 0 2px 1px; padding-left: 7px; gap: 3px; border: 1px solid #7d82a0; border-radius: 9px; background: linear-gradient(#d5d8e8, #fff 40%); }
.filter svg { width: 12px; height: 12px; }
.filter input { flex: 1; height: 13px; }
.scroller { display: flex; flex: 1; min-height: 0; background: #e1e4ed; }
.tree { flex: 1; min-width: 0; overflow: hidden; }
.tree, .tree ul { list-style: none; margin: 0; padding: 0; }
.tree ul { padding-left: 19px; }
.tree li { background: repeating-linear-gradient(#7c8496 0 1px, transparent 1px 2px) 10px 0 / 1px 100% no-repeat; }
.tree li:last-child { background-size: 1px 9px; }
.tree .open > li:last-child { background-size: 1px 100%; }
.row { display: flex; align-items: center; height: 18px; white-space: nowrap; }
.row svg { width: 16px; height: 16px; flex: none; margin-right: 5px; }
.twig { position: relative; flex: none; width: 21px; height: 18px; padding: 5px 0 0 6px; background: repeating-linear-gradient(90deg, #7c8496 0 1px, transparent 1px 2px) 10px 9px / 10px 1px no-repeat; }
.exp { display: block; width: 9px; height: 9px; border: 1px solid #8b92a3; background: linear-gradient(#222, #222) center / 5px 1px no-repeat, #f3f5fa; }
.plus { background: linear-gradient(#222, #222) center / 5px 1px no-repeat, linear-gradient(#222, #222) center / 1px 5px no-repeat, #f3f5fa; }
.vbar { display: flex; flex-direction: column; width: 14px; flex: none; background: #f0f0f0; }
.vbar svg, .hbar svg { flex: none; width: 14px; height: 16px; fill: none; stroke: #444; stroke-width: 2; }
.vthumb { flex: 1; margin: 35px 0 122px; background: #cdcdcd; }
.hbar { display: flex; flex: none; height: 16px; margin-right: 14px; background: #f0f0f0; }
.hthumb { flex: 1; margin: 0 71px 0 2px; background: #cdcdcd; }
.splitter { position: absolute; z-index: 2; right: -9px; top: 246px; width: 9px; height: 30px; display: flex; flex-direction: column; align-items: center; justify-content: space-evenly; border: 1px solid #777b90; border-left: 0; border-radius: 0 4px 4px 0; background: #e6e8f2; }
.splitter i { width: 4px; height: 5px; background: #4a4e62; clip-path: polygon(100% 0, 100% 100%, 0 50%); }

.view { position: relative; flex: 1; min-width: 0; }
.model { display: block; width: 100%; height: 100%; }
.axis { font: 11px "Liberation Sans", sans-serif; }
.mark { font: 41px "Liberation Mono", monospace; }
.han { font: 300 50px "Noto Sans CJK SC", sans-serif; }
.mark-shade { fill: #4e4e4e; }
.mark-face { fill: #f4f3ee; }
.hud { position: absolute; top: -14px; left: 37%; display: flex; align-items: center; gap: 7px; }
.hud .drop { margin: 0 2px 0 -4px; }
.mdi { position: absolute; top: -12px; right: 5px; display: flex; gap: 9px; }
.mdi svg { width: 14px; height: 14px; }
.taskpane { position: absolute; top: 41px; right: 0; width: 17px; overflow: hidden; display: flex; flex-direction: column; gap: 1px; }
.taskpane button { width: 24px; height: 23px; padding-left: 3px; border: 1px solid #6e7288; border-radius: 4px 0 0 4px; background: #babdcf; }
.taskpane .on { background: #eef0f7; }
.activate { position: absolute; z-index: 1; right: 17px; bottom: -7px; display: flex; flex-direction: column; gap: 2px; color: #a8aab4; font: 14px/20px "Noto Sans", sans-serif; white-space: nowrap; }
.activate strong { font-size: 19px; line-height: 24px; font-weight: 400; }

/* sheet tabs and status bar */
.sheets { display: flex; flex: none; height: 15px; border-top: 1px solid #000; background: #e3e5ee; font: 12px/13px "Liberation Sans", sans-serif; }
.steps { display: flex; width: 71px; padding-left: 3px; background: #b5b8ca; border-right: 2px solid #4c4f62; }
.steps button { display: flex; align-items: center; justify-content: center; width: 16px; border: 1px solid #8b8ea4; }
.steps svg { width: 9px; height: 9px; fill: #8f92a8; stroke: #8f92a8; }
.sheet { padding: 0 13px 0 8px; border: solid #4c4f62; border-width: 0 2px 1px 0; background: #bcbfd0; }
.sheet.on { padding: 0 9px; background: #dde0ec; font-weight: bold; }
.status { display: flex; flex: none; height: 16px; padding: 3px 27px 0 3px; border-top: 1px solid #777b90; background: linear-gradient(#dcdfec, #c9cddd); overflow: hidden; }
.edition { margin-right: auto; }
.state { width: 94px; }
.mode { width: 124px; }
.qhelp { width: 13px; height: 13px; border: 1px solid #1c3c6c; background: #fff; font: bold 11px/11px "Liberation Sans", sans-serif; color: #159a2c; margin-top: -1px; }
.tag { margin: -2px 0 0 50px; }
```
